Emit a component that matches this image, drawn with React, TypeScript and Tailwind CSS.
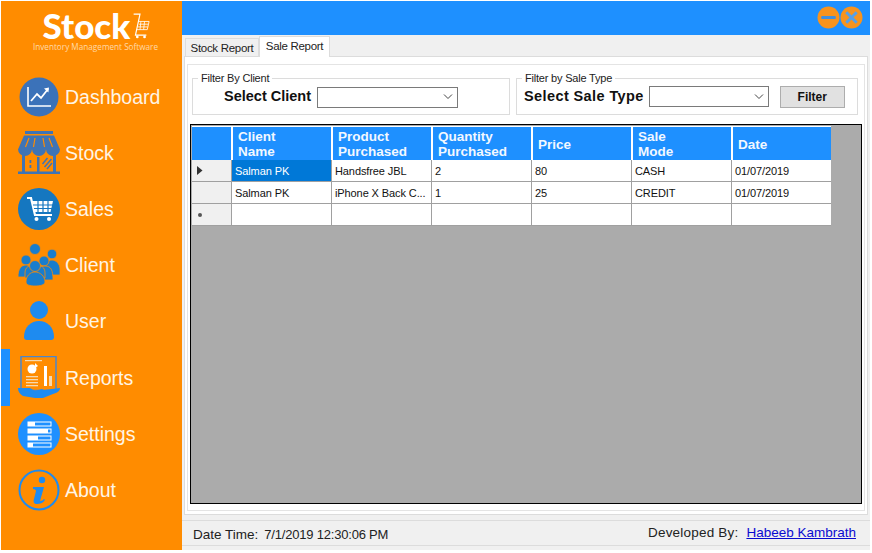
import React from "react";

const ui = "font-['Liberation_Sans',Arial,sans-serif]";

function Circle({ color, children }: { color: string; children?: React.ReactNode }) {
  return (
    <svg width="44" height="44" viewBox="0 0 44 44">
      <circle cx="22" cy="22" r="21" fill={color} />
      {children}
    </svg>
  );
}

const DashboardIcon = () => (
  <svg width="44" height="44" viewBox="0 0 44 44">
    <circle cx="22" cy="22" r="19.5" fill="#3b72b9" />
    <path d="M11 12v19h23" fill="none" stroke="#fff" strokeWidth="1.6" />
    <path d="M14 26l6-7 4 4 7-9" fill="none" stroke="#fff" strokeWidth="1.8" />
    <path d="M27 13.5l5-1-.6 5z" fill="#fff" />
  </svg>
);

const StockIcon = () => (
  <svg width="44" height="44" viewBox="0 0 44 44">
    <g fill="#3f74b5">
      <rect x="8" y="0" width="28" height="3" />
      <path d="M7 4.500h30l6 14H1z" />
      <path d="M1 18a7 7 0 0 0 14 0zM15 18a7 7 0 0 0 14 0zM29 18a7 7 0 0 0 14 0z" />
      <rect x="5" y="24" width="3" height="17" />
      <rect x="20" y="26" width="2.500" height="15" />
      <rect x="36" y="24" width="3" height="17" />
      <rect x="1" y="40.500" width="42" height="2.500" />
      <rect x="12.500" y="29" width="1.800" height="3" />
      <rect x="12.500" y="34" width="1.800" height="3" />
    </g>
    <g stroke="#ff8c00" strokeWidth="1.200">
      <path d="M12 7l-3.500 9M18 7l-1.500 9M26 7l1.500 9M32 7l3.500 9" />
    </g>
    <g stroke="#3f74b5" strokeWidth="1.500">
      <path d="M25.500 33l5-6M27.500 36l7-8M30 38l5-6" />
    </g>
  </svg>
);

const SalesIcon = () => (
  <Circle color="#1577c0">
    <path d="M10 11h4l4 17h17" fill="none" stroke="#fff" strokeWidth="2.2" />
    <path d="M15 14h21l-2.500 11H17.500z" fill="#fff" />
    <path d="M16 18h20M17 21.500h18M21 14v11M26 14v11M31 14v11" stroke="#1577c0" strokeWidth="1.2" />
    <circle cx="19.500" cy="32" r="2" fill="#fff" />
    <circle cx="32" cy="32" r="2" fill="#fff" />
  </Circle>
);

const ClientIcon = () => (
  <svg width="44" height="44" viewBox="0 0 44 44">
    <g fill="#197dcc" stroke="#ff8c00" strokeWidth="0.8">
      <circle cx="18" cy="6" r="5.500" />
      <circle cx="35" cy="11" r="4.800" />
      <path d="M27 28c0-8 4-11 8-11s8 4 8 9v6H29z" />
      <circle cx="9" cy="17" r="5" />
      <path d="M1 34c0-8 3-12 8-12s8 4 8 12z" />
      <circle cx="27" cy="18" r="5" />
      <path d="M19 34c0-7 3-11 9-11s8 4 8 14H20z" />
      <path d="M8 30c0-6 4-8 10-8s10 2 10 8v5H8z" />
      <circle cx="18" cy="23" r="5.500" />
      <path d="M9 39c0-6 4-10 9-10s10 4 10 10c0 3-5 4-10 4s-9-1-9-4z" />
    </g>
  </svg>
);

const UserIcon = () => (
  <svg width="44" height="44" viewBox="0 0 44 44">
    <g fill="#1e8bf0">
      <circle cx="22" cy="11" r="9" />
      <path d="M7 38c0-10 7-16 15-16s15 6 15 16c0 2-1 3-3 3H10c-2 0-3-1-3-3z" />
    </g>
  </svg>
);

const ReportsIcon = () => (
  <svg width="44" height="44" viewBox="0 0 44 44">
    <rect x="4" y="0.500" width="35" height="34" fill="none" stroke="#4b86cc" strokeWidth="1.500" />
    <rect x="8" y="4" width="17" height="1.200" fill="#f6d9b0" />
    <circle cx="15" cy="13" r="4.500" fill="#fff" />
    <path d="M18 7l3 3-3 2z" fill="#fff" />
    <rect x="9" y="20" width="12" height="1.300" fill="#f6d9b0" />
    <rect x="9" y="23" width="12" height="1.300" fill="#f6d9b0" />
    <rect x="9" y="26" width="12" height="1.300" fill="#f6d9b0" />
    <rect x="9" y="29" width="12" height="1.300" fill="#f6d9b0" />
    <rect x="27" y="10" width="3" height="20" fill="#fff" />
    <rect x="32" y="20" width="3" height="10" fill="#f6d9b0" />
    <path d="M1 32h12l5 3 7-2 2 1 16-2c0 3-3 5-7 6l-10 4h-8L6 40c-3-2-5-4-5-8z" fill="#1e8bf0" />
  </svg>
);

const SettingsIcon = () => (
  <Circle color="#1e90ff">
    {[10, 17, 24, 31].map((y, i) => (
      <g key={y}>
        <rect x="11" y={y} width="23" height="4" fill="none" stroke="#fff" strokeWidth="1" />
        <rect x="11" y={y} width={[7, 20, 10, 5][i]} height="4" fill="#fff" />
      </g>
    ))}
  </Circle>
);

const AboutIcon = () => (
  <svg width="44" height="44" viewBox="0 0 44 44">
    <circle cx="22" cy="22" r="19.500" fill="none" stroke="#1e8bf0" strokeWidth="2" />
    <circle cx="25" cy="12" r="3.200" fill="#1e8bf0" />
    <path d="M16 19h11l-4 14c2 0 3-1 4-2l1 1c-2 3-5 4-8 4-3 0-4-2-3-5l2-8c0-1-1-2-3-2z" fill="#1e8bf0" />
  </svg>
);

const nav: { label: string; icon: React.ReactNode; active?: boolean }[] = [
  { label: "Dashboard", icon: <DashboardIcon /> },
  { label: "Stock", icon: <StockIcon /> },
  { label: "Sales", icon: <SalesIcon /> },
  { label: "Client", icon: <ClientIcon /> },
  { label: "User", icon: <UserIcon /> },
  { label: "Reports", icon: <ReportsIcon />, active: true },
  { label: "Settings", icon: <SettingsIcon /> },
  { label: "About", icon: <AboutIcon /> },
];

const CartLogo = () => (
  <svg width="20" height="28" viewBox="0 0 22 28">
    <g fill="none" stroke="#fff" strokeWidth="1.300">
      <path d="M4 1h7L6 24h12" />
      <path d="M9 9h12l-2 9H7M10 12h10M8.500 15h11M12 9l-1 9M16 9l-1 9" strokeWidth="0.900" />
    </g>
    <circle cx="8" cy="26" r="1.500" fill="#fff" />
    <circle cx="16" cy="26" r="1.500" fill="#fff" />
  </svg>
);

function Sidebar() {
  return (
    <aside className="flex w-[181px] shrink-0 flex-col bg-[#ff8c00]">
      <div className="flex h-[68px] flex-col items-center pt-[10px] pl-[10px]">
        <div className="flex h-[29px] items-center">
          <span className="font-['Lato',sans-serif] text-[35px] leading-[29px] font-black text-white">Stock</span>
          <CartLogo />
        </div>
        <span className="mt-[1px] -ml-[2px] font-['Open_Sans',sans-serif] text-[8.200px] leading-[11px] text-[#ffd9a8]">
          Inventory Management Software
        </span>
      </div>
      {nav.map((n) => (
        <div key={n.label} className={`flex items-center ${n.active ? "h-[57px]" : "h-[56px]"}`}>
          <div className={`h-full w-[9px] ${n.active ? "bg-[#1e90ff]" : ""}`} />
          <div className="ml-[7px] flex w-[44px] justify-center">{n.icon}</div>
          <span className={`ml-[4px] ${ui} pt-[2px] text-[19.500px] leading-none text-[#fff5e6]`}>
            {n.label}
          </span>
        </div>
      ))}
    </aside>
  );
}

const Chevron = () => (
  <svg width="10" height="6" viewBox="0 0 10 6">
    <path d="M1 .5l4 4 4-4" fill="none" stroke="#444" strokeWidth="1" />
  </svg>
);

function Select({ width }: { width: string }) {
  return (
    <div className={`flex h-[21px] ${width} items-center justify-end border border-[#7a7a7a] bg-white pr-[4px]`}>
      <Chevron />
    </div>
  );
}

function Group({ title, className, children }: { title: string; className: string; children: React.ReactNode }) {
  return (
    <div className={`relative h-[37px] border border-[#dcdcdc] ${className}`}>
      <span className="absolute -top-[7px] left-[5px] bg-white px-[3px] text-[11px] leading-[13px] tracking-[-0.2px] text-[#222]">
        {title}
      </span>
      {children}
    </div>
  );
}

const columns = [
  ["Client", "Name"],
  ["Product", "Purchased"],
  ["Quantity", "Purchased"],
  ["Price"],
  ["Sale", "Mode"],
  ["Date"],
];

const rows = [
  ["Salman PK", "Handsfree JBL", "2", "80", "CASH", "01/07/2019"],
  ["Salman PK", "iPhone X Back C...", "1", "25", "CREDIT", "01/07/2019"],
  ["", "", "", "", "", ""],
];

function DataGrid() {
  return (
    <div className="mx-[2px] h-[380px] border border-black bg-[#ababab] pt-[1px] pl-[1px]">
      <div className="grid w-[639px] grid-cols-[39px_repeat(6,100px)]">
        <div className="h-[34px] border-t border-white bg-[#1e90ff]" />
        {columns.map((c) => (
          <div
            key={c[0]}
            className="flex h-[34px] flex-col justify-center border-t border-l-2 border-white bg-[#1e90ff] pt-[1px] pl-[5px] text-[13.500px] leading-[15px] font-bold text-[#f2f8ff]"
          >
            {c.map((l) => (
              <span key={l}>{l}</span>
            ))}
          </div>
        ))}
        {rows.map((r, i) => (
          <React.Fragment key={i}>
            <div className="flex h-[22px] items-center border-b border-[#a0a0a0] bg-[#f0f0f0] pl-[5px]">
              {i === 0 && (
                <svg width="6" height="9" viewBox="0 0 6 9">
                  <path d="M0 0l5.500 4.500L0 9z" fill="#333" />
                </svg>
              )}
              {i === 2 && <span className="ml-[1px] h-[4px] w-[4px] rounded-full bg-[#555]" />}
            </div>
            {r.map((cell, j) => (
              <div
                key={j}
                className={`flex h-[22px] items-center border-b border-l border-[#a0a0a0] pt-[1px] pl-[3px] text-[11px] tracking-[-0.1px] whitespace-nowrap ${
                  i === 0 && j === 0 ? "bg-[#0078d7] text-white" : "bg-white text-[#111]"
                }`}
              >
                {cell}
              </div>
            ))}
          </React.Fragment>
        ))}
      </div>
    </div>
  );
}

export default function App() {
  return (
    <div className={`flex h-[553px] w-[872px] bg-white pt-[1px] pr-[2px] pb-[3px] pl-[1px] ${ui}`}>
      <Sidebar />
      <main className="flex min-w-0 flex-1 flex-col bg-[#f0f0f0]">
        <header className="flex h-[34px] shrink-0 items-center justify-end bg-[#1e90ff] pr-[7px] pb-[2px]">
          <svg width="23" height="23" viewBox="0 0 22 22">
            <circle cx="11" cy="11" r="10.500" fill="#f7931e" />
            <rect x="4" y="9.500" width="14" height="3" rx="1" fill="#3f8fe0" />
          </svg>
          <svg width="23" height="23" viewBox="0 0 22 22">
            <circle cx="11" cy="11" r="10.500" fill="#f7931e" />
            <path d="M6 6l10 10M16 6L6 16" stroke="#57a0e8" strokeWidth="2.800" />
          </svg>
        </header>

        <div className="flex h-[21px] items-end pl-[3px] text-[11.500px] tracking-[-0.3px] text-[#222]">
          <div className="flex h-[18px] w-[74px] items-center justify-center border border-b-0 border-[#dcdcdc] pt-[2px]">
            Stock Report
          </div>
          <div className="relative -mb-[1px] flex h-[21px] w-[71px] items-center justify-center border border-b-0 border-[#dcdcdc] bg-white pb-[1px]">
            Sale Report
          </div>
        </div>

        <div className="mx-[2px] h-[459px] border border-[#dcdcdc] bg-white px-[2px] pt-[7px] pb-[3px]">
          <div className="flex h-full flex-col border border-[#e4e4e4] bg-white">
            <div className="flex h-[59px] shrink-0 gap-[6px] px-[4px] pt-[13px]">
              <Group title="Filter By Client" className="w-[318px]">
                <div className="flex h-full items-center pt-[1px] pl-[31px]">
                  <span className="mr-[6px] text-[14.500px] font-bold text-[#111]">Select Client</span>
                  <Select width="w-[141px]" />
                </div>
              </Group>
              <Group title="Filter by Sale Type" className="w-[342px]">
                <div className="flex h-full items-center pl-[7px]">
                  <span className="mr-[5px] text-[14.500px] font-bold tracking-[0.4px] text-[#111]">Select Sale Type</span>
                  <Select width="w-[120px]" />
                  <button className="ml-[11px] h-[22px] w-[65px] border border-[#adadad] bg-[#e1e1e1] text-[12px] font-bold text-[#111]">
                    Filter
                  </button>
                </div>
              </Group>
            </div>
            <DataGrid />
          </div>
        </div>

        <footer className="mt-[5px] flex h-[26px] items-center justify-between border-y border-[#dcdcdc] pr-[14px] pl-[11px] text-[13.500px] text-[#222]">
          <span className="flex gap-[6px] pt-[4px]">
            <span>Date Time:</span>
            <span className="text-[13px] tracking-[-0.2px]">7/1/2019 12:30:06 PM</span>
          </span>
          <span className="pt-[1px]">
            <span className="tracking-[0.2px]">Developed By:</span>
            <a className="ml-[8px] text-[#0a0ad0] underline">Habeeb Kambrath</a>
          </span>
        </footer>
      </main>
    </div>
  );
}
